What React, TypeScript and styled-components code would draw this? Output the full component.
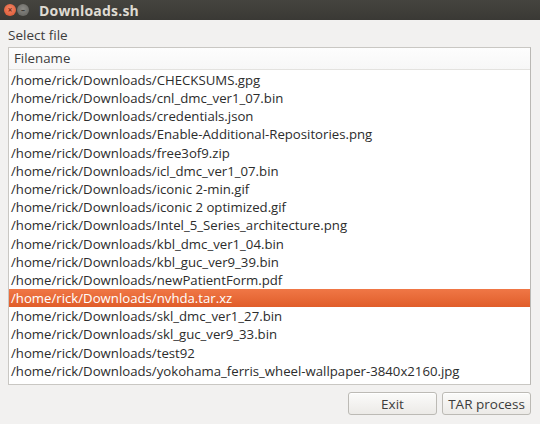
import * as React from 'react';
import styled, {createGlobalStyle} from 'styled-components';

//region [[ Styles ]]

const GlobalStyle = createGlobalStyle`
  html, body {
    margin: 0;
    padding: 0;
    background: #f2f1f0;
  }
  body {
    font-family: "Open Sans", "DejaVu Sans", sans-serif;
  }
`;

const Window = styled.div`
  display: flex;
  flex-direction: column;
  width: 540px;
  height: 424px;
  background: #f2f1f0;
  overflow: hidden;
`;

const TitleBar = styled.div`
  display: flex;
  align-items: center;
  flex-shrink: 0;
  height: 20px;
  padding-left: 4px;
  background: linear-gradient(#45443f, #3a3935);
  color: #dfdbd2;
`;

const WindowButton = styled.div<{ $close?: boolean }>`
  width: 12px;
  height: 12px;
  margin-right: 1px;
  border-radius: 50%;
  display: flex;
  align-items: center;
  justify-content: center;
  background: ${p => p.$close
    ? 'radial-gradient(circle at 50% 40%, #f3896a, #d9512c)'
    : 'radial-gradient(circle at 50% 40%, #8c8b86, #5f5e5a)'};
  font-size: 8px;
  line-height: 1;
  color: ${p => p.$close ? '#7a2a14' : '#3d3c38'};
  font-weight: bold;
`;

const Title = styled.div`
  margin-left: 9px;
  font-size: 14px;
  font-weight: 700;
  letter-spacing: 0.2px;
`;

const Body = styled.div`
  display: flex;
  flex-direction: column;
  flex: 1;
  padding: 6px 9px 9px 8px;
  min-height: 0;
`;

const Label = styled.div`
  font-size: 13.5px;
  color: #3c3c3c;
  height: 21px;
  line-height: 18px;
`;

const ListBox = styled.div`
  display: flex;
  flex-direction: column;
  height: 339px;
  background: #ffffff;
  border: 1px solid #c9c7c3;
  border-right-color: #bab8b4;
  overflow: hidden;
`;

const Header = styled.div`
  flex-shrink: 0;
  height: 21px;
  line-height: 20px;
  padding-left: 5px;
  font-size: 13.3px;
  color: #3c3c3c;
  background: linear-gradient(#fdfdfd, #f7f7f7);
  border-bottom: 1px solid #e3e2df;
`;

const Rows = styled.div`
  display: flex;
  flex-direction: column;
  padding-top: 1px;
`;

const Row = styled.div<{ $selected?: boolean }>`
  flex-shrink: 0;
  height: 18.2px;
  line-height: 18px;
  padding-left: 2px;
  font-size: 13.2px;
  white-space: nowrap;
  color: ${p => p.$selected ? '#ffffff' : '#2c2c2c'};
  background: ${p => p.$selected ? 'linear-gradient(#f07746, #e05d2a)' : 'transparent'};
`;

const Footer = styled.div`
  display: flex;
  justify-content: flex-end;
  gap: 5px;
  margin-top: 7px;
`;

const Button = styled.button`
  width: 89px;
  height: 23px;
  padding: 0;
  font-family: inherit;
  font-size: 13.5px;
  color: #3c3c3c;
  background: linear-gradient(#fbfbfa, #eceae7);
  border: 1px solid #bcbab5;
  border-radius: 3px;
  box-shadow: inset 0 1px 0 #ffffff;
`;

//endregion [[ Styles ]]

const files = [
  'CHECKSUMS.gpg',
  'cnl_dmc_ver1_07.bin',
  'credentials.json',
  'Enable-Additional-Repositories.png',
  'free3of9.zip',
  'icl_dmc_ver1_07.bin',
  'iconic 2-min.gif',
  'iconic 2 optimized.gif',
  'Intel_5_Series_architecture.png',
  'kbl_dmc_ver1_04.bin',
  'kbl_guc_ver9_39.bin',
  'newPatientForm.pdf',
  'nvhda.tar.xz',
  'skl_dmc_ver1_27.bin',
  'skl_guc_ver9_33.bin',
  'test92',
  'yokohama_ferris_wheel-wallpaper-3840x2160.jpg',
];

const selected = 'nvhda.tar.xz';

export default function App() {
  return <>
    <GlobalStyle/>
    <Window>
      <TitleBar>
        <WindowButton $close>×</WindowButton>
        <WindowButton>–</WindowButton>
        <Title>Downloads.sh</Title>
      </TitleBar>
      <Body>
        <Label>Select file</Label>
        <ListBox>
          <Header>Filename</Header>
          <Rows>
            {files.map(f =>
              <Row key={f} $selected={f === selected}>/home/rick/Downloads/{f}</Row>
            )}
          </Rows>
        </ListBox>
        <Footer>
          <Button>Exit</Button>
          <Button>TAR process</Button>
        </Footer>
      </Body>
    </Window>
  </>;
}
